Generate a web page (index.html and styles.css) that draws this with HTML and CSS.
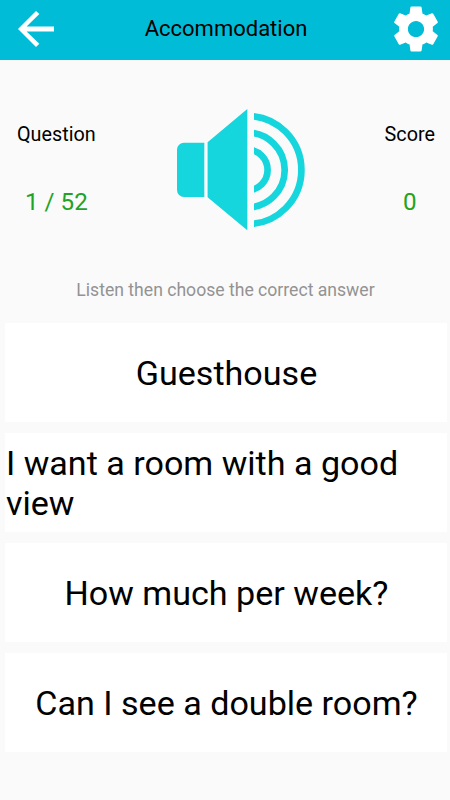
FILE: index.html
```
<!DOCTYPE html>
<html lang="en">
<head>
    <meta charset="UTF-8">
    <title>Accommodation</title>
    <link rel="stylesheet" href="styles.css">
</head>
<body>
    <header>
        <a href="#" class="icon-link" aria-label="Back">
            <svg viewBox="0 0 24 24"><path d="M20 10.9H7.83l5.66-5.59L12 4l-8 8 8 8 1.49-1.41L7.83 13.1H20z"/></svg>
        </a>
        <h1>Accommodation</h1>
        <a href="#" class="icon-link" aria-label="Settings">
            <svg viewBox="0 0 24 24"><path d="M19.43 12.98c.04-.32.07-.64.07-.98s-.03-.66-.07-.98l2.11-1.65c.19-.15.24-.42.12-.64l-2-3.46c-.12-.22-.39-.3-.61-.22l-2.49 1c-.52-.4-1.08-.73-1.69-.98l-.38-2.65C14.46 2.18 14.25 2 14 2h-4c-.25 0-.46.18-.49.42l-.38 2.65c-.61.25-1.17.59-1.69.98l-2.49-1c-.23-.09-.49 0-.61.22l-2 3.46c-.13.22-.07.49.12.64l2.11 1.65c-.04.32-.07.65-.07.98s.03.66.07.98l-2.11 1.65c-.19.15-.24.42-.12.64l2 3.46c.12.22.39.3.61.22l2.49-1c.52.4 1.08.73 1.69.98l.38 2.65c.03.24.24.42.49.42h4c.25 0 .46-.18.49-.42l.38-2.65c.61-.25 1.17-.59 1.69-.98l2.49 1c.23.09.49 0 .61-.22l2-3.46c.12-.22.07-.49-.12-.64l-2.11-1.65zM12 15.6c-1.98 0-3.6-1.62-3.6-3.6s1.62-3.6 3.6-3.6 3.6 1.62 3.6 3.6-1.62 3.6-3.6 3.6z"/></svg>
        </a>
    </header>
    <main>
        <section class="status">
            <div class="counter">
                <span class="label">Question</span>
                <span class="value">1 / 52</span>
            </div>
            <svg class="speaker" viewBox="0 0 130 122">
                <path d="M28.3 33.7H8a7 7 0 0 0-7 7V81a7 7 0 0 0 7 7h20.3z"/>
                <path d="M31.6 33.2 71.3 0v121.3L31.6 88.3z"/>
                <clipPath id="waves"><path d="M78 0h52v122H78z"/></clipPath>
                <g class="waves" clip-path="url(#waves)">
                    <circle cx="71.3" cy="61" r="20.3"/>
                    <circle cx="71.3" cy="61" r="37.4"/>
                    <circle cx="71.3" cy="61" r="54.1"/>
                </g>
            </svg>
            <div class="counter">
                <span class="label">Score</span>
                <span class="value">0</span>
            </div>
        </section>
        <p class="hint">Listen then choose the correct answer</p>
        <ul class="answers">
            <li><span>Guesthouse</span></li>
            <li><span>I want a room with a good view</span></li>
            <li><span>How much per week?</span></li>
            <li><span>Can I see a double room?</span></li>
        </ul>
    </main>
</body>
</html>
```
FILE: styles.css
```
body {
    font-family: Roboto, sans-serif;
    margin: 0;
    background-color: #fafafa;
    color: #000;
}

header {
    display: flex;
    align-items: center;
    justify-content: space-between;
    box-sizing: border-box;
    height: 60px;
    padding: 0 7px 2px 9px;
    background-color: #00bcd7;
}

h1 {
    margin: 0;
    padding-bottom: 2px;
    font-size: 22px;
    font-weight: 400;
}

.icon-link {
    display: flex;
}

.icon-link svg {
    width: 54px;
    height: 54px;
    fill: #fff;
}

.status {
    display: flex;
    justify-content: space-between;
    height: 122px;
    padding: 49px 15px 0 17px;
}

.counter {
    display: flex;
    flex-direction: column;
    align-items: center;
    padding-top: 14px;
}

.label {
    font-size: 19.8px;
    line-height: 24px;
}

.value {
    margin-top: 40px;
    font-size: 24.2px;
    line-height: 30px;
    color: #1fa324;
}

.speaker {
    width: 130px;
    height: 122px;
    margin-right: -1px;
    fill: #15d5dd;
}

.waves {
    fill: none;
    stroke: #15d5dd;
    stroke-width: 6.7;
}

.hint {
    margin: 47px 0 0;
    padding-left: 1px;
    font-size: 17.6px;
    line-height: 24px;
    text-align: center;
    color: #939393;
}

.answers {
    display: flex;
    flex-direction: column;
    gap: 11px;
    list-style-type: none;
    margin: 21px 3px 0 5px;
    padding: 0;
}

.answers li {
    display: flex;
    align-items: center;
    justify-content: center;
    box-sizing: border-box;
    height: 99px;
    padding-left: 1px;
    background-color: #fff;
    font-size: 34.1px;
    line-height: 40px;
}
```
